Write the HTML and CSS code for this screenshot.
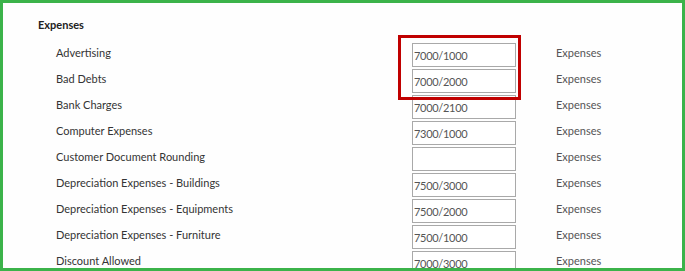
FILE: index.html
```html
<!DOCTYPE html>
<html lang="en">
<head>
  <meta charset="UTF-8">
  <title>Expenses</title>
  <link rel="stylesheet" href="styles.css">
</head>
<body>

<div class="kader">
  <h2 class="baslik">Expenses</h2>

  <div class="hesaplar">
    <div class="satir">
      <div class="ad">Advertising</div>
      <input type="text" class="kod" value="7000/1000">
      <div class="tur">Expenses</div>
    </div>
    <div class="satir">
      <div class="ad">Bad Debts</div>
      <input type="text" class="kod" value="7000/2000">
      <div class="tur">Expenses</div>
    </div>
    <div class="satir">
      <div class="ad">Bank Charges</div>
      <input type="text" class="kod" value="7000/2100">
      <div class="tur">Expenses</div>
    </div>
    <div class="satir">
      <div class="ad">Computer Expenses</div>
      <input type="text" class="kod" value="7300/1000">
      <div class="tur">Expenses</div>
    </div>
    <div class="satir">
      <div class="ad">Customer Document Rounding</div>
      <input type="text" class="kod" value="">
      <div class="tur">Expenses</div>
    </div>
    <div class="satir">
      <div class="ad">Depreciation Expenses - Buildings</div>
      <input type="text" class="kod" value="7500/3000">
      <div class="tur">Expenses</div>
    </div>
    <div class="satir">
      <div class="ad">Depreciation Expenses - Equipments</div>
      <input type="text" class="kod" value="7500/2000">
      <div class="tur">Expenses</div>
    </div>
    <div class="satir">
      <div class="ad">Depreciation Expenses - Furniture</div>
      <input type="text" class="kod" value="7500/1000">
      <div class="tur">Expenses</div>
    </div>
    <div class="satir">
      <div class="ad">Discount Allowed</div>
      <input type="text" class="kod" value="7000/3000">
      <div class="tur">Expenses</div>
    </div>
  </div>

  <!-- vurgulanan ilk iki kod -->
  <div class="vurgu"></div>
</div>

</body>
</html>
```

FILE: styles.css
```css
body {
  margin: 0;
  background-color: #fff;
  font-family: 'Lato', 'Open Sans', sans-serif;
  font-size: 11px;
  color: #333;
}

.kader {
  position: relative;
  box-sizing: border-box;
  width: 685px;
  height: 271px;
  border: 3px solid #3bb34a;
  background-color: #fefefe;
  overflow: hidden;
  padding: 15px 0 0 35px;
}

.baslik {
  margin: 0 0 11px 0;
  font-size: 11px;
  font-weight: bold;
  line-height: 14px;
  color: #222;
}

.hesaplar {
  padding-left: 18px;
  display: flex;
  flex-direction: column;
  gap: 2px;
}

.satir {
  display: grid;
  grid-template-columns: 356px 144px auto;
  height: 24px;
}

.ad {
  line-height: 20px;
  color: #343434;
}

.kod {
  box-sizing: border-box;
  width: 104px;
  height: 24px;
  margin: 0;
  padding: 0 1px;
  border: 1px solid #a9a9a9;
  background: #fff;
  font-family: inherit;
  font-size: 11px;
  letter-spacing: -0.3px;
  color: #555;
  outline: none;
}

.tur {
  line-height: 20px;
  color: #555;
}

.vurgu {
  position: absolute;
  left: 395px;
  top: 32px;
  width: 117px;
  height: 59px;
  border: 3px solid #c00000;
}
```
